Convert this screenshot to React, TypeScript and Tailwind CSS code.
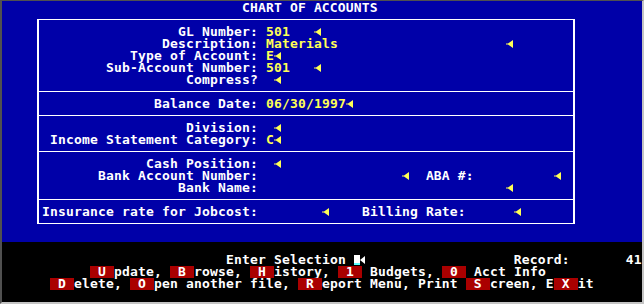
import React from "react";

// Text-mode screen: 80 columns x 8px, rows of 12px
type Kind = "w" | "y" | "arrow" | "hot" | "cursor";
type Seg = [number, string, Kind?];

function Arrow({ color = "#ffff55", tail = true }: { color?: string; tail?: boolean }) {
  return (
    <svg width="8" height="12" viewBox="0 0 8 12" className="inline-block align-top">
      {tail ? (
        <path d="M0 5.5H2L7 2V10L2 6.5H0Z" fill={color} />
      ) : (
        <path d="M0 6L5 2V10Z" fill={color} />
      )}
    </svg>
  );
}

function Row({ segs, base = 0 }: { segs: Seg[]; base?: number }) {
  const out: React.ReactNode[] = [];
  let pos = base;
  segs.forEach(([col, text, kind = "w"], i) => {
    if (col > pos) out.push(" ".repeat(col - pos));
    pos = col;
    if (kind === "arrow") {
      out.push(<Arrow key={i} />);
      pos += 1;
    } else if (kind === "cursor") {
      // cursor block + its arrow fill two cells
      out.push(
        <span key={i} className="inline-block align-top w-[6px] h-[12px] pt-[1px]">
          <span className="block w-[6px] h-[10px] bg-white border-b-2 border-[#55ffff]" />
        </span>
      );
      out.push(
        <span key={i + "a"} className="inline-block align-top w-[10px] h-[12px]">
          <Arrow color="#ffffff" tail={false} />
        </span>
      );
      pos += 2;
    } else if (kind === "hot") {
      out.push(
        <span key={i} className="inline-block align-top w-[24px] h-[12px] bg-[#aa0000] text-white">
          {" " + text + " "}
        </span>
      );
      pos += 3;
    } else {
      out.push(
        <span key={i} className={kind === "y" ? "text-[#ffff55]" : "text-white"}>
          {text}
        </span>
      );
      pos += text.length;
    }
  });
  return <div className="h-[12px] whitespace-pre">{out}</div>;
}

const BOX: Seg[][][] = [
  [
    [[22, "GL Number:"], [33, "501", "y"], [39, "", "arrow"]],
    [[20, "Description:"], [33, "Materials", "y"], [63, "", "arrow"]],
    [[16, "Type of Account:"], [33, "E", "y"], [34, "", "arrow"]],
    [[13, "Sub-Account Number:"], [33, "501", "y"], [39, "", "arrow"]],
    [[23, "Compress?"], [34, "", "arrow"]],
  ],
  [[[19, "Balance Date:"], [33, "06/30/1997", "y"], [43, "", "arrow"]]],
  [
    [[23, "Division:"], [34, "", "arrow"]],
    [[6, "Income Statement Category:"], [33, "C", "y"], [34, "", "arrow"]],
  ],
  [
    [[18, "Cash Position:"], [34, "", "arrow"]],
    [[12, "Bank Account Number:"], [50, "", "arrow"], [53, "ABA #:"], [69, "", "arrow"]],
    [[22, "Bank Name:"], [63, "", "arrow"]],
  ],
  [[[5, "Insurance rate for Jobcost:"], [40, "", "arrow"], [45, "Billing Rate:"], [64, "", "arrow"]]],
];

export default function App() {
  return (
    <div
      className="w-[644px] h-[304px] bg-black border-l-2 border-t border-r-2 border-b-2 border-l-[#505050] border-t-[#505050] border-r-[#c4c4c4] border-b-[#c4c4c4] text-white font-bold text-[13px] leading-[12px] tracking-[0.17px]"
      style={{ fontFamily: '"DejaVu Sans Mono", "Liberation Mono", monospace' }}
    >
      <div className="h-[241px] bg-[#0000a8] pt-[1px]">
        <Row segs={[[30, "CHART OF ACCOUNTS"]]} />
        <div className="ml-[35px] mt-[5px] w-[538px] border-x-2 border-y border-white">
          {BOX.map((sec, i) => (
            <div key={i} className={`pl-[3px] pt-[6px] pb-[5px] ${i > 0 ? "border-t border-white" : ""}`}>
              {sec.map((segs, j) => (
                <Row key={j} segs={segs} base={5} />
              ))}
            </div>
          ))}
        </div>
      </div>
      <div className="h-[60px] pt-[12px]">
        <Row segs={[[28, "Enter Selection"], [44, "", "cursor"], [64, "Record:"], [78, "41"]]} />
        <Row
          segs={[
            [11, "U", "hot"], [14, "pdate,"], [21, "B", "hot"], [24, "rowse,"], [31, "H", "hot"],
            [34, "istory,"], [42, "1", "hot"], [46, "Budgets,"], [55, "0", "hot"], [59, "Acct Info"],
          ]}
        />
        <Row
          segs={[
            [6, "D", "hot"], [9, "elete,"], [16, "O", "hot"], [19, "pen another file,"], [37, "R", "hot"],
            [40, "eport Menu, Print"], [58, "S", "hot"], [61, "creen, E"], [69, "X", "hot"], [72, "it"],
          ]}
        />
      </div>
    </div>
  );
}
